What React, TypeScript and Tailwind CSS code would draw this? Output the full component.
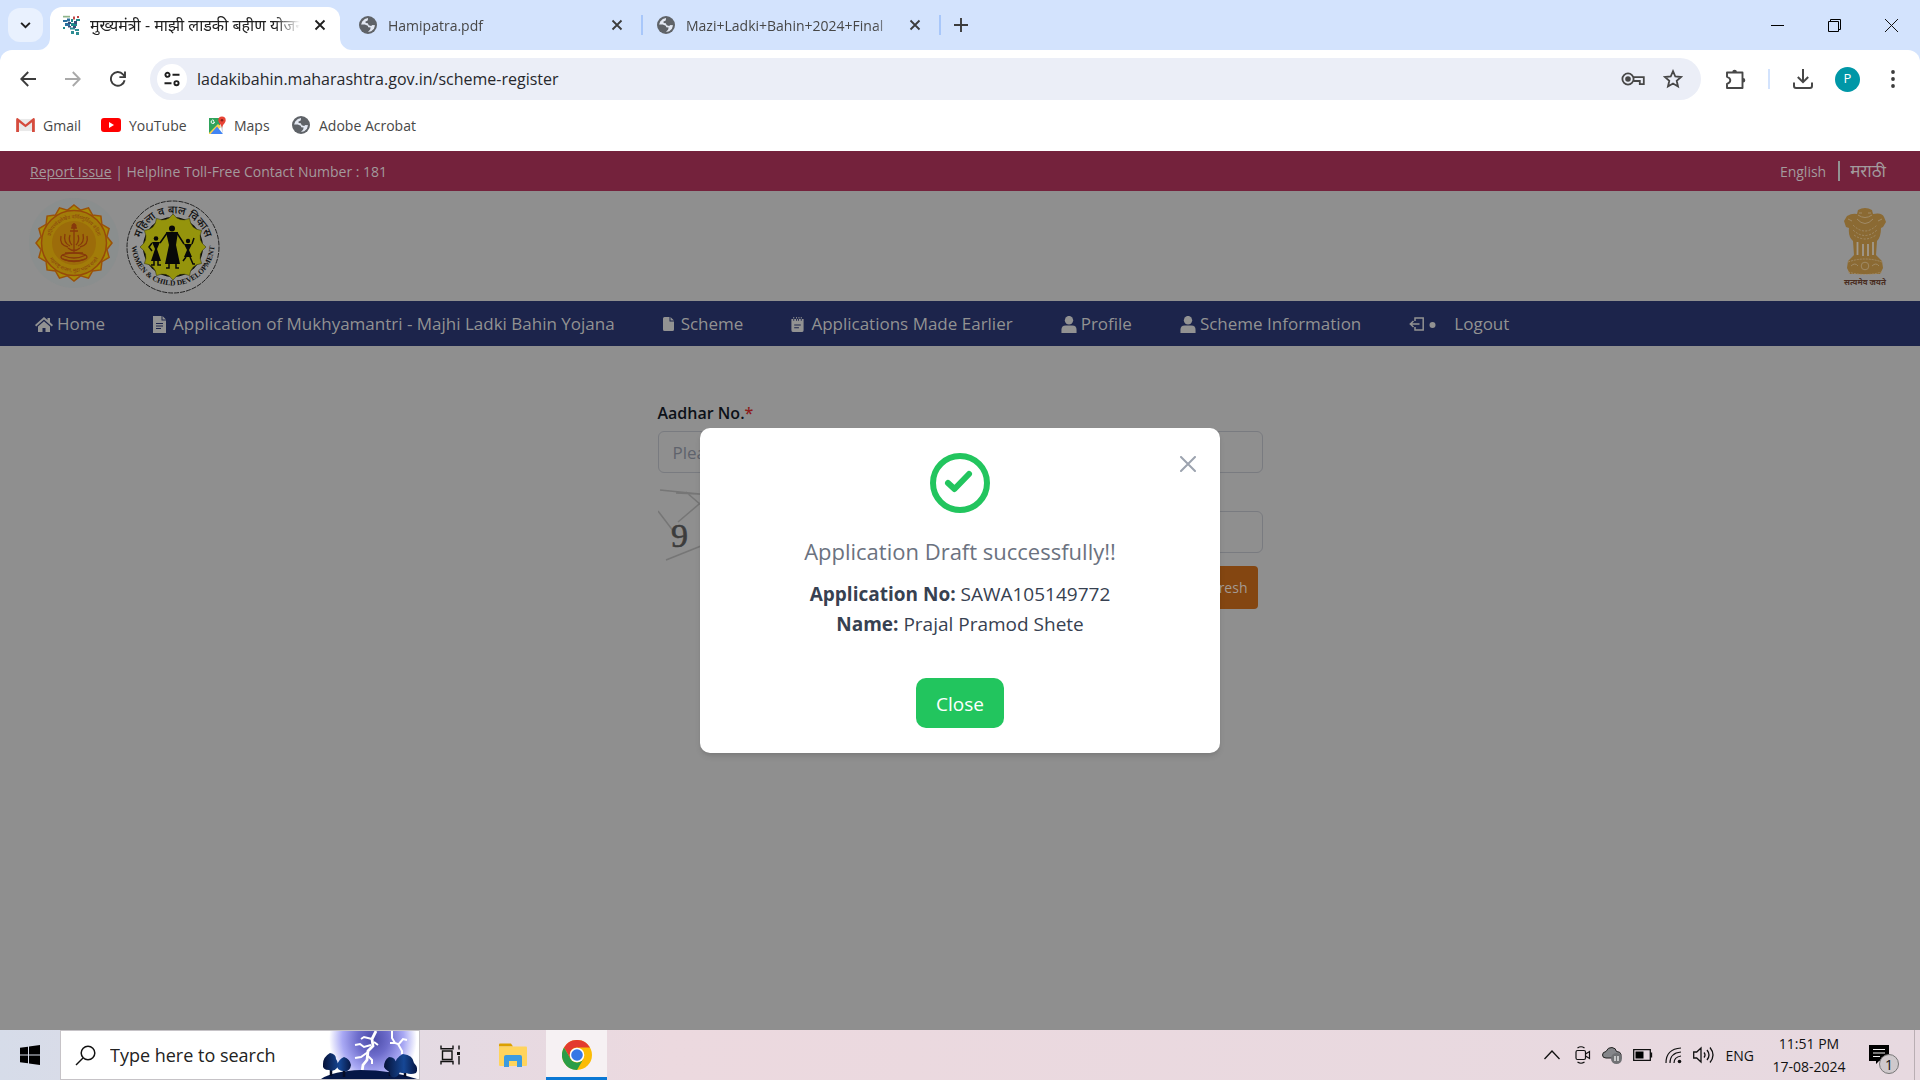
import type { ReactNode } from 'react';

type IconProps = { className?: string };

function Globe({ className = '' }: IconProps) {
  return (
    <svg viewBox="0 0 20 20" className={'h-[18px] w-[18px] shrink-0 ' + className} aria-hidden="true">
      <circle cx="10" cy="10" r="10" fill="#5f6368" />
      <path d="M10 2.200 6.500 3.300 3.600 6 2.300 9.500h4.200l3.200 1.200.6 1.800 2.600.4-.5 2.100-2.400 2.700 3.600-.8 3-2.600 1.200-4-2.800-.3-1.600 1.200-2.600-1-1-2.200-2.400-.2-.2-1.800 2.200-.6.600-1.800Z" fill="#e3e8f2" />
      <path d="M3 11.500 7.500 13l1 1.500-.5 2.500-3-1.800Z" fill="#5f6368" />
    </svg>
  );
}

function CloseX({ className = '' }: IconProps) {
  return (
    <svg viewBox="0 0 12 12" className={'h-3 w-3 ' + className} fill="none" stroke="currentColor" strokeWidth="1.8" aria-hidden="true">
      <path d="m1.500 1.500 9 9m0-9-9 9" />
    </svg>
  );
}

function SiteFavicon() {
  return (
    <svg viewBox="0 0 18 20" className="h-5 w-[18px] shrink-0" aria-hidden="true">
      <path d="M1 .8h7v1.700H1z" fill="#8fb48a" />
      <path d="M1 5h4v2H1zM5 3.500h3v3H5zM3 8h5v3H3z" fill="#2a6f9e" />
      <path d="M9 4h2v3H9zM14 4h4v2h-4zM9 8h6v3H9zM1 12h2v2H1z" fill="#1f8a8a" />
      <path d="M11 1.500h2v3h-2zM15 1h2v2h-2z" fill="#c04848" />
      <path d="M8 12.500h5v2H8zM9 16h3v3H9zM13 14h4v2h-4zM14 17h3v3h-3z" fill="#2e8c93" />
      <path d="M6 7h3v2H6zM12 6h3v3h-3zM6 11h3v1.500H6zM11 11h3v2h-3z" fill="#3a4d7a" />
    </svg>
  );
}

function Tab({ icon, title, width }: { icon: ReactNode; title: string; width: string }) {
  return (
    <div className={'flex h-full items-center ' + width}>
      {icon}
      <span className="ml-[11px] w-[210px] shrink-0 overflow-hidden text-[14px] whitespace-nowrap text-[#474747] [mask-image:linear-gradient(to_right,black_90%,transparent)]">
        {title}
      </span>
      <button type="button" aria-label={'Close ' + title} className="ml-auto text-[#3c3c3c]">
        <CloseX />
      </button>
    </div>
  );
}

function TabStrip() {
  return (
    <div className="flex h-[50px] shrink-0 items-center bg-[#d3e3fd]">
      <button type="button" aria-label="Search tabs" className="ml-2 flex h-[34px] w-[35px] items-center justify-center rounded-xl bg-[#e9f1fe]">
        <svg viewBox="0 0 12 8" className="h-[7px] w-[11px]" fill="none" stroke="#1f1f1f" strokeWidth="2.2" aria-hidden="true">
          <path d="m1 1 5 5 5-5" />
        </svg>
      </button>
      <div className="relative ml-[7px] flex h-[43px] w-[290px] shrink-0 items-center self-end rounded-t-xl bg-white pr-[14px] pb-[7px] pl-3">
        <svg viewBox="0 0 12 12" className="absolute bottom-0 -left-3 h-3 w-3" aria-hidden="true">
          <path d="M12 0v12H0A12 12 0 0 0 12 0Z" fill="#fff" />
        </svg>
        <svg viewBox="0 0 12 12" className="absolute -right-3 bottom-0 h-3 w-3" aria-hidden="true">
          <path d="M0 0v12h12A12 12 0 0 1 0 0Z" fill="#fff" />
        </svg>
        <SiteFavicon />
        <span className="ml-[10px] w-[210px] shrink-0 overflow-hidden text-[16px] whitespace-nowrap text-[#1f1f1f] [mask-image:linear-gradient(to_right,black_88%,transparent)]">
          मुख्यमंत्री - माझी लाडकी बहीण योजना
        </span>
        <button type="button" aria-label="Close tab" className="ml-auto text-[#1f1f1f]">
          <CloseX />
        </button>
      </div>
      <div className="ml-[19px] flex h-full items-center">
        <Tab icon={<Globe />} title="Hamipatra.pdf" width="w-[264px]" />
        <span className="mr-[14px] ml-[18px] h-5 w-0.5 bg-[#a8c7fa]" />
        <Tab icon={<Globe />} title="Mazi+Ladki+Bahin+2024+Final" width="w-[264px]" />
        <span className="ml-[18px] h-5 w-0.5 bg-[#a8c7fa]" />
        <button type="button" aria-label="New tab" className="ml-[13px]">
          <svg viewBox="0 0 14 14" className="h-[14px] w-[14px]" stroke="#3c3c3c" strokeWidth="1.9" aria-hidden="true">
            <path d="M7 0v14M0 7h14" />
          </svg>
        </button>
      </div>
      <div className="ml-auto flex">
        <button type="button" aria-label="Minimize" className="flex h-[49px] w-[57px] items-center justify-center">
          <svg viewBox="0 0 13 13" className="h-[13px] w-[13px]" stroke="#000" aria-hidden="true"><path d="M0 6.500h13" /></svg>
        </button>
        <button type="button" aria-label="Restore" className="flex h-[49px] w-[56px] items-center justify-center">
          <svg viewBox="0 0 13 13" className="h-[13px] w-[13px]" fill="none" stroke="#000" aria-hidden="true"><path d="M.5 2.500h10v10H.5zM2.500 2.500v-2h10v10h-2" /></svg>
        </button>
        <button type="button" aria-label="Close window" className="flex h-[49px] w-[58px] items-center justify-center">
          <svg viewBox="0 0 13 13" className="h-[13px] w-[13px]" fill="none" stroke="#111" aria-hidden="true"><path d="m0 0 13 13M13 0 0 13" /></svg>
        </button>
      </div>
    </div>
  );
}

function ToolButton({ label, children }: { label: string; children: ReactNode }) {
  return (
    <button type="button" aria-label={label} className="flex h-10 w-[45px] shrink-0 items-center justify-center">
      {children}
    </button>
  );
}

function Toolbar() {
  return (
    <div className="shrink-0 bg-[#d3e3fd]">
      <div className="flex h-[58px] items-center rounded-t-xl bg-white pr-[5px] pl-[5px]">
        <ToolButton label="Back">
          <svg viewBox="0 0 16 16" className="h-4 w-4" fill="none" stroke="#3c3c3c" strokeWidth="1.9" aria-hidden="true"><path d="M16 8H1.500M8.200 1 1.300 8l6.900 7" /></svg>
        </ToolButton>
        <ToolButton label="Forward">
          <svg viewBox="0 0 16 16" className="h-4 w-4" fill="none" stroke="#a9a9a9" strokeWidth="1.9" aria-hidden="true"><path d="M0 8h14.500M7.800 1l6.900 7-6.900 7" /></svg>
        </ToolButton>
        <ToolButton label="Reload">
          <svg viewBox="0 0 16 16" className="h-4 w-4" fill="none" stroke="#3c3c3c" strokeWidth="1.9" aria-hidden="true"><path d="M14.600 9.200A6.900 6.900 0 1 1 13 3.300L14.600 5M15 .5v5.600H9.400" /></svg>
        </ToolButton>
        <div className="ml-[10px] flex h-[42px] flex-1 items-center rounded-full bg-[#ebeef7] pr-[18px] pl-[7px]">
          <button type="button" aria-label="View site information" className="flex h-[30px] w-[30px] shrink-0 items-center justify-center rounded-full bg-white">
            <svg viewBox="0 0 16 16" className="h-4 w-4" fill="none" stroke="#1f1f1f" strokeWidth="1.9" aria-hidden="true"><circle cx="3.500" cy="3.800" r="2.100" /><path d="M8.500 3.800h7M.5 12.200h7" /><circle cx="12.500" cy="12.200" r="2.100" /></svg>
          </button>
          <input aria-label="Address and search bar" defaultValue="ladakibahin.maharashtra.gov.in/scheme-register" className="ml-[10px] h-full flex-1 bg-transparent text-[16px] text-[#27282c] outline-none" />
          <button type="button" aria-label="Passwords">
            <svg viewBox="0 0 24 14" className="h-[14px] w-6" fill="none" stroke="#474747" strokeWidth="1.8" aria-hidden="true"><circle cx="7" cy="7" r="5.600" /><circle cx="7" cy="7" r="2.800" fill="#474747" stroke="none" /><path d="M12.200 5.200h10.600v7h-4V9h-6.600" /></svg>
          </button>
          <button type="button" aria-label="Bookmark this tab" className="ml-[18px]">
            <svg viewBox="0 0 20 20" className="h-5 w-5" fill="none" stroke="#474747" strokeWidth="1.8" aria-hidden="true"><path d="m10 2.200 2.300 5.300 5.800.5-4.400 3.800 1.300 5.700-5-3-5 3 1.300-5.700L1.900 8l5.800-.5Z" /></svg>
          </button>
        </div>
        <div className="ml-3 flex items-center">
          <ToolButton label="Extensions">
            <svg viewBox="0 0 21 21" className="h-[21px] w-[21px]" fill="none" stroke="#474747" strokeWidth="1.9" strokeLinejoin="round" aria-hidden="true"><path d="M2 3.500h15.500v15.500H2v-4.200c4.400-1.200 4.400-5.800 0-7Z" /><path d="M7.300 3a2.300 2.300 0 0 1 4.600 0ZM18 9a2.300 2.300 0 0 1 0 4.600Z" fill="#474747" stroke="none" /></svg>
          </ToolButton>
          <span className="mx-[10px] h-5 w-0.5 bg-[#d3e3fd]" />
          <ToolButton label="Downloads">
            <svg viewBox="0 0 20 20" className="h-5 w-5" fill="none" stroke="#474747" strokeWidth="2" aria-hidden="true"><path d="M10 0v13M4.800 8l5.200 5.200L15.200 8M1 13.500V17q0 2 2 2h14q2 0 2-2v-3.500" /></svg>
          </ToolButton>
          <ToolButton label="Profile P">
            <span className="flex h-[25px] w-[25px] items-center justify-center rounded-full bg-[#0097a7] text-[13px] text-white">P</span>
          </ToolButton>
          <ToolButton label="Menu">
            <svg viewBox="0 0 4 18" className="h-[18px] w-1" fill="#3c3c3c" aria-hidden="true"><circle cx="2" cy="2" r="1.900" /><circle cx="2" cy="9" r="1.900" /><circle cx="2" cy="16" r="1.900" /></svg>
          </ToolButton>
        </div>
      </div>
    </div>
  );
}

function Bookmarks() {
  return (
    <nav aria-label="Bookmarks" className="flex h-[43px] shrink-0 items-center bg-white pb-[9px] pl-4 text-[14px] text-[#474747]">
      <a href="#gmail" className="flex w-[85px] items-center gap-2">
        <svg viewBox="0 0 20 15" className="h-[14px] w-[19px]" aria-hidden="true"><path d="M2 1h16v13H2z" fill="#e9e9e9" /><path d="M0 1.500Q0 0 1.500 0L10 7l8.500-7Q20 0 20 1.500V15h-3V4.500L10 10 3 4.500V15H0Z" fill="#d54b3d" /></svg>
        Gmail
      </a>
      <a href="#youtube" className="flex w-[107px] items-center gap-2">
        <svg viewBox="0 0 20 14" className="h-[14px] w-5" aria-hidden="true"><rect width="20" height="14" rx="3" fill="#f00" /><path d="M8 4v6l5-3Z" fill="#fff" /></svg>
        YouTube
      </a>
      <a href="#maps" className="flex w-[84px] items-center gap-2">
        <svg viewBox="0 0 18 18" className="h-[18px] w-[18px]" aria-hidden="true"><path d="M1 2h11v7l-9 9H1Z" fill="#2fa35b" /><path d="M10 8 1 17v1h4l8-7Z" fill="#ffd04b" /><path d="M9 10.500 2.500 18H15Z" fill="#4285f4" /><path d="m12 9 3 9V8Z" fill="#dadce0" /><path d="M14 .5a3.700 3.700 0 0 1 3.700 3.700c0 2.800-2.900 3.800-3.700 7.800-.8-4-3.700-5-3.700-7.800A3.700 3.700 0 0 1 14 .5Z" fill="#e84435" /><circle cx="14" cy="4.200" r="1.300" fill="#8c1f18" /><path d="M6 4.600a1.700 1.700 0 1 0 .5 1.400H5" fill="none" stroke="#fff" /></svg>
        Maps
      </a>
      <a href="#acrobat" className="flex items-center gap-[9px]"><Globe />Adobe Acrobat</a>
    </nav>
  );
}

function starPoints(cx: number, cy: number, outer: number, inner: number, count: number) {
  return Array.from({ length: count * 2 }, (_, i) => {
    const r = i % 2 === 0 ? outer : inner;
    const a = (Math.PI * i) / count - Math.PI / 2;
    return (cx + r * Math.cos(a)).toFixed(1) + ',' + (cy + r * Math.sin(a)).toFixed(1);
  }).join(' ');
}

function StateSeal() {
  return (
    <svg viewBox="0 0 92 92" className="h-[92px] w-[92px]" role="img" aria-label="Government of Maharashtra">
      <defs>
        <path id="seal-top" d="M21.500 46a24.500 24.500 0 0 1 49 0" />
        <path id="seal-bottom" d="M17 46a29 29 0 0 0 58 0" />
      </defs>
      <circle cx="46" cy="46" r="45" fill="#8a8e8e" />
      <polygon points={starPoints(46, 46, 38, 33.5, 16)} fill="#a78a08" stroke="#9a5209" strokeWidth="1.500" />
      <circle cx="46" cy="46" r="32.500" fill="#a27c09" stroke="#97490a" strokeWidth="1.500" />
      <circle cx="46" cy="46" r="22" fill="#9c6c0a" />
      <g fill="#8a4310" fontFamily="Noto Sans, sans-serif" fontSize="5">
        <text><textPath href="#seal-top" startOffset="50%" textAnchor="middle">प्रतिपच्चंद्रलेखेव वर्धिष्णुर्विश्व वंदिता</textPath></text>
        <text><textPath href="#seal-bottom" startOffset="50%" textAnchor="middle">महाराष्ट्र शासन, मुद्रा भद्राय राजते</textPath></text>
      </g>
      <g fill="none" stroke="#87390b" strokeWidth="1.300">
        <path d="M46 26v30M43 31h6M42 34h8M34 58q12 6 24 0M37 56h18M35 62q11 5 22 0M40 51q6 5 12 0" />
        <path d="M33 39q-2 9 7 11M37 37q-2 9 5 12M42 38q-2 6 2 10M59 39q2 9-7 11M55 37q2 9-5 12M50 38q2 6-2 10" />
        <ellipse cx="46" cy="60" rx="13" ry="4" />
      </g>
      <circle cx="46" cy="29" r="2.500" fill="#87390b" />
    </svg>
  );
}

function WomenChildSeal() {
  return (
    <svg viewBox="0 0 94 94" className="h-[94px] w-[94px]" role="img" aria-label="Women and Child Development">
      <defs>
        <path id="wcd-top" d="M13.500 47a33.500 33.500 0 0 1 67 0" />
        <path id="wcd-bottom" d="M5.500 44a41.500 41.500 0 0 0 83 0" />
      </defs>
      <circle cx="47" cy="47" r="46" fill="#939393" stroke="#222" strokeWidth="1" strokeDasharray="5 1" />
      <circle cx="47" cy="47" r="30" fill="#080808" />
      <path
        d={
          Array.from({ length: 12 }, (_, i) => {
            const a = (Math.PI * i) / 6 - Math.PI / 2;
            const m = a + Math.PI / 12;
            const b = a + Math.PI / 6;
            const p = (r: number, t: number) => (47 + r * Math.cos(t)).toFixed(1) + ' ' + (47 + r * Math.sin(t)).toFixed(1);
            return (i === 0 ? 'M' + p(33, a) : '') + 'Q' + p(25, m) + ' ' + p(33, b);
          }).join('') + 'Z'
        }
        fill="#95940c"
        stroke="#3b3b08"
        strokeWidth=".6"
      />
      <g fill="#080808">
        <circle cx="46" cy="28.500" r="3" />
        <path d="M40 32h12l-2 13 4 19H39l4-19Z" />
        <circle cx="30" cy="38.500" r="2.300" />
        <path d="M26 42h8l-3 7 4 12H25l4-12Z" />
        <circle cx="62" cy="41" r="2.200" />
        <path d="M58 44h8l-3 6 3 7h-8l3-7Z" />
      </g>
      <path d="m41 33-7 10M51 33l7 11M26 43l-3 4 3 4M66 44l2-6M43 64v4h-3M50 64v4h3M28 61v4h-3M32 61v4h3M60 57l-3 4M64 57l3 7h2" fill="none" stroke="#080808" strokeWidth="1.500" />
      <text fill="#111" fontFamily="Noto Sans, sans-serif" fontWeight="500" fontSize="11"><textPath href="#wcd-top" startOffset="50%" textAnchor="middle">महिला व बाल विकास</textPath></text>
      <text fill="#111" fontFamily="Liberation Serif, serif" fontWeight="700" fontSize="7.500"><textPath href="#wcd-bottom" startOffset="50%" textAnchor="middle">WOMEN &amp; CHILD DEVELOPMENT</textPath></text>
    </svg>
  );
}

function NationalEmblem() {
  return (
    <svg viewBox="0 0 44 80" className="h-20 w-11" role="img" aria-label="Satyameva Jayate">
      <path d="M15 3q7-4 14 0l1 4q9-2 11 3l2 5-3 5-2 1q0 9-4 13l-1 14 6 6 1 7-3 6H7l-3-6 1-7 6-6-1-14Q5 30 6 21l-3-1-2-6 3-5q5-3 10-2Z" fill="#8b6a33" />
      <g fill="none" stroke="#a08a66" strokeWidth="1">
        <path d="M15 8q7 5 14 0M14 12q8 9 16 0M16 6h3M25 6h3M5 12l4 2M39 12l-4 2" />
        <path d="M10 18q12 12 24 0M10 23q12 11 24 0M11 28q11 8 22 0" strokeDasharray="2 1.500" />
        <path d="M5 55q17-6 34 0M5 65q17 5 34 0" strokeDasharray="2 1" />
        <circle cx="22" cy="59" r="3.800" /><path d="M8 59q4-4 7 0M29 59q4-4 7 0" />
      </g>
      <path d="M14.500 35v13M20 37v12M25 37v12M30 35v13" stroke="#a09a8e" strokeWidth="1.800" />
      <text x="22" y="78" textAnchor="middle" fill="#4a2e22" fontFamily="Noto Sans, sans-serif" fontWeight="700" fontSize="8">सत्यमेव जयते</text>
    </svg>
  );
}

const personIcon = (
  <svg viewBox="0 0 16 18" className="h-[17px] w-4" fill="#929292" aria-hidden="true"><ellipse cx="8" cy="4.500" rx="4.400" ry="4.600" /><path d="M0 18v-3.500Q0 10 4.500 10h7q4.500 0 4.500 4.500V18Z" /></svg>
);

const navItems: { label: string; icon: ReactNode; gap: string }[] = [
  {
    label: 'Home',
    gap: 'gap-1',
    icon: <svg viewBox="0 0 18 15" className="h-[15px] w-[18px]" aria-hidden="true"><path d="M9 0 0 8l1.200 1.400L9 2.600l7.800 6.800L18 8l-3-2.700V1h-2.500v2.100Z" fill="#929292" /><path d="m9 4.200-6 5.300V15h4.500v-4h3v4H15V9.500Z" fill="#929292" /></svg>,
  },
  {
    label: 'Application of Mukhyamantri - Majhi Ladki Bahin Yojana',
    gap: 'gap-[7px]',
    icon: <svg viewBox="0 0 13 17" className="h-[17px] w-[13px]" aria-hidden="true"><path d="M0 0h8.500v4.500H13V17H0ZM9.500 0 13 3.500H9.500Z" fill="#929292" /><path d="M3 7.500h7M3 10h7M3 12.500h5" stroke="#1c244b" /></svg>,
  },
  {
    label: 'Scheme',
    gap: 'gap-[7px]',
    icon: <svg viewBox="0 0 11 14" className="h-[14px] w-[11px]" aria-hidden="true"><path d="M1.500 0h5v4.500H11v8Q11 14 9.500 14h-8Q0 14 0 12.500v-11Q0 0 1.500 0ZM7.500 0 11 3.500H7.500Z" fill="#929292" /></svg>,
  },
  {
    label: 'Applications Made Earlier',
    gap: 'gap-[7px]',
    icon: <svg viewBox="0 0 13 16" className="h-[15px] w-[13px]" aria-hidden="true"><path d="M0 2h2v2h1V2h2v2h1V2h1v2h1V2h2v2h1V2h2v12q0 2-2 2H2q-2 0-2-2ZM2 0h1v1.500H2zM5 0h1v1.500H5zM7.500 0h1v1.500h-1zM10 0h1v1.500h-1z" fill="#929292" /><path d="M3 8.500h7M3 11.500h5" stroke="#1c244b" strokeWidth="1.200" /></svg>,
  },
  { label: 'Profile', gap: 'gap-1', icon: personIcon },
  { label: 'Scheme Information', gap: 'gap-1', icon: personIcon },
  {
    label: 'Logout',
    gap: 'gap-[18px]',
    icon: <svg viewBox="0 0 27 14" className="h-[14px] w-[27px]" aria-hidden="true"><path d="M6 4V1h8.200v12H6v-3M10.500 7H1.500M4.500 4 1.300 7l3.200 3" fill="none" stroke="#929292" strokeWidth="1.500" /><circle cx="23.500" cy="8" r="3" fill="#929292" /></svg>,
  },
];

function SiteHeader() {
  return (
    <header>
      <div className="flex h-10 items-center justify-between bg-[#74223c] pr-[34px] pl-[30px] text-[14px] text-[#a39a9d]">
        <p className="whitespace-nowrap"><a href="#report" className="underline">Report Issue</a> | Helpline Toll-Free Contact Number : 181</p>
        <div className="flex items-center">
          <button type="button">English</button>
          <span className="mr-[10px] ml-3 h-5 w-0.5 bg-[#929292]" />
          <button type="button" className="text-[17px] leading-5">मराठी</button>
        </div>
      </div>
      <div className="flex h-[110px] items-start justify-between pr-[33px] pl-7">
        <div className="flex gap-[6px]">
          <div className="pt-[6px]"><StateSeal /></div>
          <div className="pt-[9px]"><WomenChildSeal /></div>
        </div>
        <div className="pt-4"><NationalEmblem /></div>
      </div>
      <nav aria-label="Main" className="flex h-[45px] items-center gap-12 bg-[#1c244b] pt-px pl-[35px] text-[17px] whitespace-nowrap text-[#929292]">
        {navItems.map((item) => (
          <a key={item.label} href="#nav" className={'flex items-center ' + item.gap}>
            {item.icon}
            {item.label}
          </a>
        ))}
      </nav>
    </header>
  );
}

function RegisterForm() {
  return (
    <form className="mx-auto mt-[55px] w-[605px]">
      <label htmlFor="aadhar" className="block text-[16px] leading-6 font-semibold text-[#0d1118]">
        Aadhar No.<span className="text-[#8c1c1c]">*</span>
      </label>
      <input id="aadhar" placeholder="Please enter Aadhar number" className="mt-[6px] h-[42px] w-full rounded-md border border-[#797b80] bg-transparent px-[14px] text-[17px] placeholder:text-[#5f636c]" />
      <div className="mt-[15px] flex items-start gap-4">
        <svg viewBox="0 0 180 74" className="h-[74px] w-[180px]" role="img" aria-label="Captcha image">
          <path d="m2 2 120 12M18 5l90 4M28 4l30 26M0 23l16 21M20 34 60 0M8 72l60-24" fill="none" stroke="#767676" strokeWidth="1.500" />
          <text x="13" y="59" fill="#3c3c3c" stroke="#3c3c3c" strokeWidth=".6" fontFamily="Liberation Serif, serif" fontSize="34">9</text>
        </svg>
        <input aria-label="Captcha" className="mt-[23px] h-[42px] min-w-0 flex-1 rounded-md border border-[#797b80] bg-transparent px-[14px]" />
      </div>
      <div className="flex justify-end pt-1 pr-[5px]">
        <button type="button" className="h-[43px] rounded-sm bg-[#844611] px-[10px] text-[14px] text-[#a39a92]">Captcha Refresh</button>
      </div>
    </form>
  );
}

function SuccessDialog() {
  return (
    <div className="absolute inset-0 flex items-center justify-center">
      <section role="dialog" aria-label="Application status" className="relative flex w-[520px] flex-col items-center rounded-[10px] bg-white pt-[25px] pb-[25px] text-[#374151] shadow-md">
        <button type="button" aria-label="Dismiss" className="absolute top-7 right-6 text-[#9ca3af]">
          <svg viewBox="0 0 16 16" className="h-4 w-4" fill="none" stroke="currentColor" strokeWidth="2" strokeLinecap="round" aria-hidden="true"><path d="m1 1 14 14M15 1 1 15" /></svg>
        </button>
        <svg viewBox="0 0 60 60" className="h-[60px] w-[60px]" fill="none" stroke="#22c55e" aria-hidden="true">
          <circle cx="30" cy="30" r="27" strokeWidth="6" />
          <path d="m18 30 6.500 6L39 21" strokeWidth="6" strokeLinecap="round" strokeLinejoin="round" />
        </svg>
        <h2 className="mt-5 text-[22px] leading-9 text-[#6b7280]">Application Draft successfully!!</h2>
        <p className="mt-[10px] text-[19px] leading-[30px]"><strong className="font-bold">Application No:</strong> SAWA105149772</p>
        <p className="text-[19px] leading-[30px]"><strong className="font-bold">Name:</strong> Prajal Pramod Shete</p>
        <button type="button" className="mt-[39px] h-[50px] w-[88px] rounded-[10px] bg-[#22c55e] pt-0.5 text-[19px] font-medium text-white">Close</button>
      </section>
    </div>
  );
}

function StormArt() {
  return (
    <svg viewBox="0 0 100 48" className="h-12 w-[100px]" aria-hidden="true">
      <defs>
        <radialGradient id="sky" cx=".5" cy=".5" r=".5">
          <stop offset="0" stopColor="#4a4aa6" /><stop offset=".35" stopColor="#6d6ccb" /><stop offset=".7" stopColor="#a9a9f4" /><stop offset="1" stopColor="#fff" />
        </radialGradient>
        <linearGradient id="tree" x1="0" x2="1"><stop offset="0" stopColor="#061238" /><stop offset=".6" stopColor="#164795" /><stop offset="1" stopColor="#071743" /></linearGradient>
      </defs>
      <ellipse cx="54" cy="8" rx="44" ry="48" fill="url(#sky)" />
      <g fill="none" stroke="#fff">
        <path d="m57 0-4 8 1 7-5 5-1 9-4 5-1 7" strokeWidth="2.800" />
        <path d="m53 8-8-2-3 2M52 14l-7 2-4-3-5 1M55 11l4 3M49 21l-7 5-6 1M49 25l4 4v4M73 0v7l3 5 3 1 4 7v3M76 12l-5 0M79 14l5-6 4 1" strokeWidth="2" />
      </g>
      <path d="M2 48q12-8 40-9 30 0 56 9Z" fill="#051747" />
      <g stroke="#050b25" strokeWidth="2.500"><path d="M12 45V30M25 46V34M71 45V34M86 46V30" /></g>
      <g fill="url(#tree)">
        <path d="M11 22q6 1 6 6 3 4 1 9-3 4-8 2-7 0-6-6 0-7 7-11ZM25 26q6 2 7 8-1 7-7 6-7 0-7-6 2-6 7-8Z" />
        <path d="M84 23q10 1 11 9 5 5 2 10-5 2-10 0-9 1-11-6-1-9 8-13ZM70 26q7 0 7 7 2 5-1 8-8 1-11-5 0-7 5-10ZM74 35q6 1 7 6-3 7-8 5-6-4 1-11Z" />
      </g>
    </svg>
  );
}

function Taskbar() {
  return (
    <footer className="flex h-[50px] shrink-0 items-center bg-linear-to-r from-[#d6dce9] via-[#ecd9df] via-35% to-[#e7d9e0] text-[#111]">
      <button type="button" aria-label="Start" className="flex h-full w-[60px] items-center justify-center">
        <svg viewBox="0 0 20 20" className="h-5 w-5" aria-hidden="true"><path d="m0 2.800 8-1.100v7.900H0ZM9 1.500 20 0v9.600H9ZM0 10.500h8v7.800l-8-1.100ZM9 10.500h11V20L9 18.500Z" /></svg>
      </button>
      <div className="flex h-full w-[360px] items-center border border-[#c6c3c7] bg-white pl-[14px]">
        <svg viewBox="0 0 21 21" className="h-[21px] w-[21px]" fill="none" stroke="#111" strokeWidth="1.500" aria-hidden="true"><circle cx="13" cy="8" r="6.800" /><path d="M8 13 1 20" /></svg>
        <input aria-label="Search" placeholder="Type here to search" className="ml-[14px] w-0 flex-1 bg-transparent text-[18px] placeholder:text-[#222]" />
        <StormArt />
      </div>
      <button type="button" aria-label="Task view" className="flex h-full w-[60px] items-center justify-center">
        <svg viewBox="0 0 20 20" className="h-5 w-5" fill="none" stroke="#111" strokeWidth="1.400" aria-hidden="true"><path d="M1 .5v3.200h12V.5M2.500 6v8.500h9.500V6ZM1 19.500v-3h12v3M19 .5v4M19 11v8.500" /><path d="M17 7h3.200v3H17z" fill="#111" stroke="none" /></svg>
      </button>
      <button type="button" aria-label="File Explorer" className="flex h-full w-[66px] items-center justify-center">
        <svg viewBox="0 0 28 24" className="h-6 w-7" aria-hidden="true"><path d="M0 1.500Q0 .5 1 .5h11l2 3H0Z" fill="#dba000" /><path d="M0 3.500h27q1 0 1 1V22q0 1-1 1H1q-1 0-1-1Z" fill="#ffd45c" /><path d="M5 24V14q0-2 2-2h14q2 0 2 2v10h-5v-6h-8v6Z" fill="#3c9be0" /></svg>
      </button>
      <button type="button" aria-label="Chrome" className="flex h-full w-[61px] items-center justify-center border-b-[3px] border-[#0a78d4] bg-[#f6f1f3] pt-[3px]">
        <svg viewBox="0 0 30 30" className="h-[30px] w-[30px]" aria-hidden="true">
          <circle cx="15" cy="15" r="15" fill="#fbbc05" />
          <path d="M2 7.500A15 15 0 0 1 28 7.500H15A7.500 7.500 0 0 0 8.500 11.300L8.500 18.700Z" fill="#e33b2e" />
          <path d="M2 7.500 8.500 18.750A7.500 7.500 0 0 0 21.500 18.750L15 30A15 15 0 0 1 2 7.500Z" fill="#2a9d47" />
          <circle cx="15" cy="15" r="7.300" fill="#fff" /><circle cx="15" cy="15" r="5.800" fill="#3578e5" />
        </svg>
      </button>
      <div className="ml-auto flex h-full items-center">
        <button type="button" aria-label="Show hidden icons"><svg viewBox="0 0 16 10" className="h-[10px] w-4" fill="none" stroke="#111" strokeWidth="1.300" aria-hidden="true"><path d="m.5 9 7.500-8 7.500 8" /></svg></button>
        <svg viewBox="0 0 16 18" className="ml-[15px] h-[18px] w-4" fill="none" stroke="#111" strokeWidth="1.200" role="img" aria-label="Meet now"><rect x="1" y="4.500" width="9.500" height="9" rx="1.500" /><path d="m10.500 8 4-2.500v7l-4-2.500M2.500 2q3.500-2.500 7 0M2.500 16q3.500 2.500 7 0" /></svg>
        <svg viewBox="0 0 20 18" className="ml-[11px] h-[18px] w-5" role="img" aria-label="OneDrive paused"><path d="M4 12Q.5 12 .5 9T4 5.500Q6 1 10 1.500q4 .5 4.500 4 4 0 4.500 3v3.500Z" fill="#85868a" stroke="#222" /><circle cx="14.500" cy="12.500" r="5.500" fill="#707174" /><path d="M13 10v5M16 10v5" stroke="#fff" strokeWidth="1.200" /></svg>
        <svg viewBox="0 0 20 12" className="ml-[11px] h-3 w-5" role="img" aria-label="Battery"><path d="M.7.700h16.600v10.600H.7ZM18.500 3.500v5" fill="none" stroke="#111" strokeWidth="1.300" /><path d="M2.500 2.500h8v7h-8z" /></svg>
        <svg viewBox="0 0 17 17" className="ml-3 h-[17px] w-[17px]" fill="none" stroke="#111" strokeWidth="1.200" role="img" aria-label="Network"><path d="M1 16Q1 2 16 1M5 16Q5 6 16 5M9 16q0-6 7-7" /><circle cx="14.500" cy="14.500" r="1.800" fill="#111" stroke="none" /></svg>
        <svg viewBox="0 0 21 18" className="ml-[11px] h-[18px] w-[21px]" fill="none" stroke="#111" strokeWidth="1.300" role="img" aria-label="Volume"><path d="M.7 6v6h3L8 16V2L3.700 6ZM11 6.500q2 2.500 0 5M14 4q4 5 0 10M17 1.500q6 7.500 0 15" /></svg>
        <button type="button" className="ml-3 text-[14px]">ENG</button>
        <div className="ml-4 w-[78px] text-center text-[14px] leading-[23px] whitespace-nowrap"><div>11:51 PM</div><div>17-08-2024</div></div>
        <button type="button" aria-label="Notifications" className="relative ml-[21px] h-5 w-[45px]">
          <svg viewBox="0 0 20 20" className="h-5 w-5" aria-hidden="true"><path d="M0 0h20v16H10l-3 3v-3H0Z" fill="#000" /><path d="M4 4.500h12M4 8h12M4 11.500h7" stroke="#eee" strokeWidth="1.200" /></svg>
          <span className="absolute top-[9px] left-[10px] flex h-5 w-5 items-center justify-center rounded-full border border-[#777] bg-[#cfc9cc] text-[14px]">1</span>
        </button>
        <span className="mr-[5px] h-full w-px bg-[#b9aeb3]" />
      </div>
    </footer>
  );
}

export default function App() {
  return (
    <div className="flex h-screen flex-col overflow-hidden font-['Open_Sans','Noto_Sans',sans-serif]">
      <TabStrip />
      <Toolbar />
      <Bookmarks />
      <main className="relative min-h-0 flex-1 overflow-hidden bg-[#8f8f8f]">
        <SiteHeader />
        <RegisterForm />
        <SuccessDialog />
      </main>
      <Taskbar />
    </div>
  );
}
